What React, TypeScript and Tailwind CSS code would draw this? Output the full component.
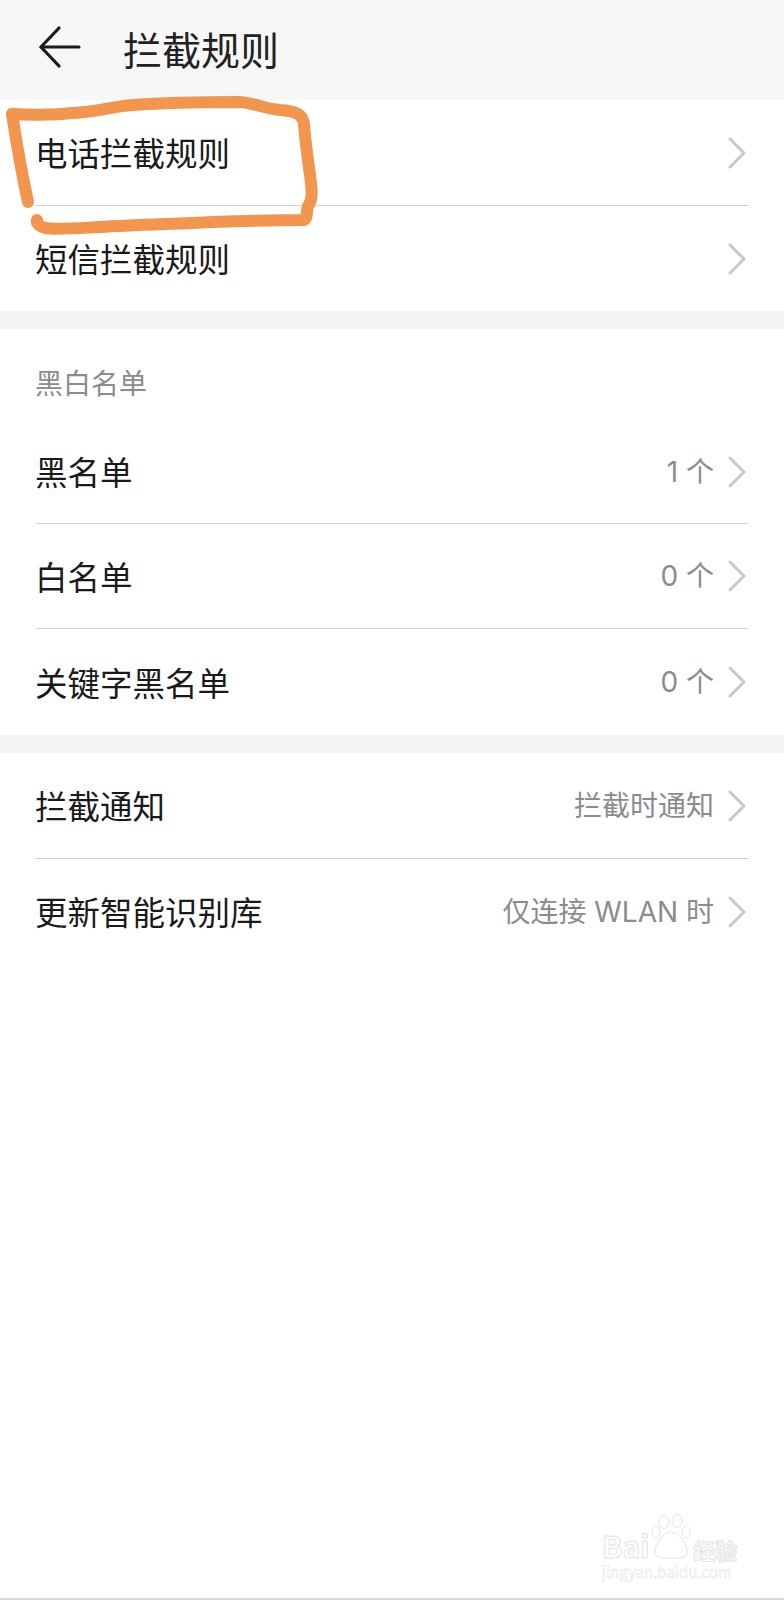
const font = { fontFamily: '"Noto Sans CJK SC", "Inter", sans-serif' };
const valueFont = { fontFamily: '"Inter", "Noto Sans CJK SC", sans-serif' };

const Chevron = () => (
  <svg className="ml-[14px] mr-[3px]" width="18" height="32" viewBox="0 0 18 32" fill="none" stroke="#c8c8c8" strokeWidth="3" strokeLinecap="round" strokeLinejoin="round">
    <path d="M2 2 L16 16 L2 30" />
  </svg>
);

const Row = ({ label, value, divider = true, height = "h-[105px]" }: { label: string; value?: string; divider?: boolean; height?: string }) => (
  <div className={`mx-[35px] flex items-center justify-between ${height} ${divider ? "border-b border-[#d4d4d4]" : ""}`}>
    <div className="text-[32.5px] leading-none text-[#1a1a1a]">{label}</div>
    <div className="flex items-center">
      {value && <div className="text-[28px] leading-none text-[#8c8c8c]" style={valueFont}>{value}</div>}
      <Chevron />
    </div>
  </div>
);

const Scribble = () => (
  <svg className="absolute left-0 top-0" width="340" height="240" viewBox="0 0 340 240" fill="none">
    <path
      d="M12 114 C40 116 60 114 84 112 C105 110 115 106 133 105 C160 103 200 102 240 102 C255 103 262 108 280 110 C295 111 303 114 304 124 C305 140 308 160 310 175 C312 190 313 200 308 206 C306 212 308 218 304 220 C280 220 240 221 213 222 C170 224 130 225 100 227 C80 228 55 230 45 228 C38 226 36 222 37 220"
      stroke="#f2954f"
      strokeWidth="12"
      strokeLinecap="round"
      strokeLinejoin="round"
    />
    <path d="M12 114 C16 140 20 165 28 202" stroke="#f2954f" strokeWidth="12" strokeLinecap="round" />
  </svg>
);

const outline = "text-white [-webkit-text-stroke:1px_#e4e4e4]";

const Watermark = () => (
  <div className="absolute left-[602px] top-[1514px] w-[145px]">
    <div className="flex h-[46px] items-end">
      <div className={`text-[30px] font-bold leading-none ${outline}`}>Bai</div>
      <svg width="44" height="46" viewBox="0 0 44 46" fill="none" stroke="#e4e4e4" strokeWidth="1">
        <ellipse cx="7" cy="18" rx="4" ry="6" />
        <ellipse cx="15" cy="8" rx="5" ry="6.5" />
        <ellipse cx="28" cy="7" rx="5" ry="6.5" />
        <ellipse cx="37" cy="18" rx="4" ry="6" />
        <path d="M22 18 C13 18 4 34 6 40 C8 46 36 46 38 40 C40 33 31 18 22 18 Z" />
      </svg>
      <div className={`text-[22px] font-bold leading-none ${outline}`}>经验</div>
    </div>
    <div className="mt-[4px] text-[15px] leading-none text-white [-webkit-text-stroke:0.5px_#e4e4e4]">jingyan.baidu.com</div>
  </div>
);

export default function App() {
  return (
    <div className="relative h-[1600px] w-[784px] overflow-hidden bg-white" style={font}>
      {/* Header */}
      <div className="flex h-[100px] items-center bg-[#f7f7f7]">
        <svg className="ml-[38px] mt-[-6px]" width="44" height="44" viewBox="0 0 44 44" fill="none" stroke="#1a1a1a" strokeWidth="3.2" strokeLinecap="round" strokeLinejoin="round">
          <path d="M3 22 H41" />
          <path d="M21 3 L3 22 L21 41" />
        </svg>
        <div className="ml-[41px] mt-[-4px] text-[39px] leading-none text-[#222222]">拦截规则</div>
      </div>

      <Row label="电话拦截规则" height="h-[106px]" />
      <Row label="短信拦截规则" divider={false} />

      <div className="h-[18px] bg-[#f3f3f3]" />

      <div className="mx-[35px] flex h-[91px] items-center pt-[15px] text-[28px] leading-none text-[#8c8c8c]">黑白名单</div>
      <Row label="黑名单" value="1 个" height="h-[104px]" />
      <Row label="白名单" value="0 个" />
      <Row label="关键字黑名单" value="0 个" height="h-[106px]" divider={false} />

      <div className="h-[18px] bg-[#f3f3f3]" />

      <Row label="拦截通知" value="拦截时通知" height="h-[106px]" />
      <Row label="更新智能识别库" value="仅连接 WLAN 时" divider={false} />

      <Scribble />
      <Watermark />
      <div className="absolute bottom-0 left-0 h-[2px] w-full bg-[#d8d8d8]" />
    </div>
  );
}
